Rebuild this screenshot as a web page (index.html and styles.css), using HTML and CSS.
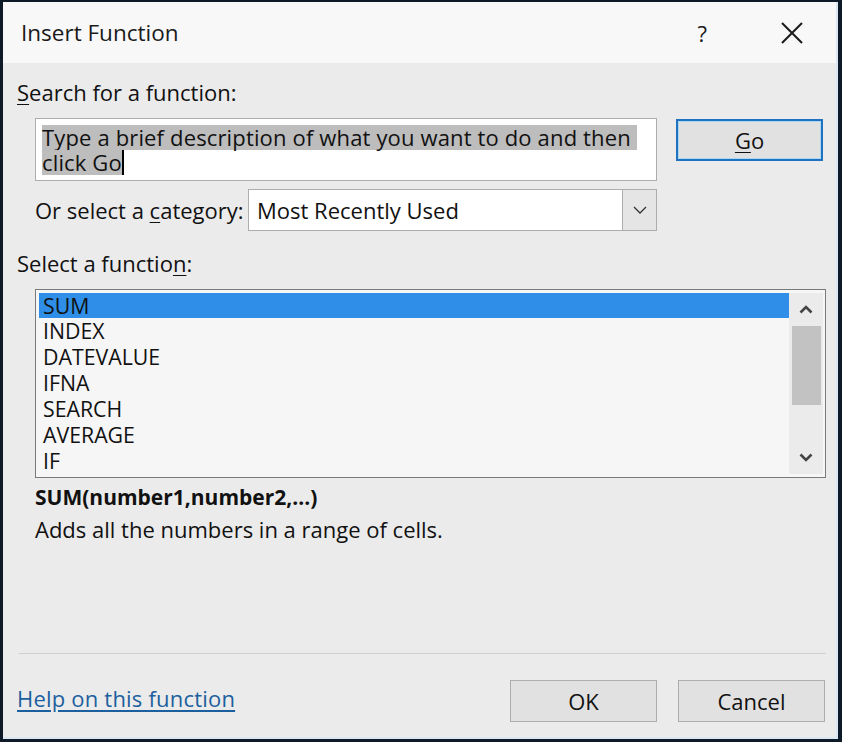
FILE: index.html
```html
<!DOCTYPE html>
<html lang="en">
<head>
<meta charset="utf-8">
<title>Insert Function</title>
<link rel="stylesheet" href="styles.css">
</head>
<body>
<div class="frame">
  <div class="window">
    <div class="titlebar">
      <span class="title">Insert Function</span>
      <span class="tb-help">?</span>
      <span class="tb-close">
        <svg width="22" height="22" viewBox="0 0 22 22"><path d="M1 1 L21 21 M21 1 L1 21" stroke="#1a1a1a" stroke-width="2" fill="none"/></svg>
      </span>
    </div>
    <div class="content">
      <div class="label"><u>S</u>earch for a function:</div>
      <div class="search-row">
        <div class="search-box">
          <div class="search-line"><span class="sel">Type a brief description of what you want to do and then </span></div>
          <div class="search-line"><span class="sel">click Go</span><span class="caret"></span></div>
        </div>
        <div class="btn btn-go"><u>G</u>o</div>
      </div>
      <div class="cat-row">
        <span class="cat-label">Or select a <u>c</u>ategory:</span>
        <div class="select">
          <span class="select-text">Most Recently Used</span>
          <span class="select-btn">
            <svg width="14" height="8" viewBox="0 0 14 8"><path d="M1 1 L7 7 L13 1" stroke="#333" stroke-width="1.3" fill="none"/></svg>
          </span>
        </div>
      </div>
      <div class="label label-fn">Select a functio<u>n</u>:</div>
      <div class="listbox">
        <div class="items">
          <div class="item selected">SUM</div>
          <div class="item">INDEX</div>
          <div class="item">DATEVALUE</div>
          <div class="item">IFNA</div>
          <div class="item">SEARCH</div>
          <div class="item">AVERAGE</div>
          <div class="item">IF</div>
        </div>
        <div class="scrollbar">
          <span class="arrow">
            <svg width="14" height="9" viewBox="0 0 14 9"><path d="M1.5 7.5 L7 2 L12.5 7.5" stroke="#444" stroke-width="2.6" fill="none"/></svg>
          </span>
          <div class="track"><div class="thumb"></div></div>
          <span class="arrow">
            <svg width="14" height="9" viewBox="0 0 14 9"><path d="M1.5 1.5 L7 7 L12.5 1.5" stroke="#444" stroke-width="2.6" fill="none"/></svg>
          </span>
        </div>
      </div>
      <div class="signature">SUM(number1,number2,...)</div>
      <div class="desc">Adds all the numbers in a range of cells.</div>
      <div class="separator"></div>
      <div class="footer">
        <a class="help-link" href="#">Help on this function</a>
        <div class="btn btn-ok">OK</div>
        <div class="btn btn-cancel">Cancel</div>
      </div>
    </div>
  </div>
</div>
</body>
</html>
```

FILE: styles.css
```css
* { box-sizing: border-box; }
html, body { margin: 0; padding: 0; }
body {
  width: 842px;
  height: 742px;
  background: #0f1a29;
  font-family: "Open Sans", "Noto Sans", sans-serif;
  color: #111;
  overflow: hidden;
}
.frame {
  padding: 2px 4px 3px 3px;
  height: 742px;
}
.window {
  height: 737px;
  border-right: 2px solid #dbe8f3;
  border-bottom: 2px solid #dbe8f3;
  display: flex;
  flex-direction: column;
  background: #ebebeb;
}
.titlebar {
  height: 61px;
  background: #f8f8f8;
  display: flex;
  align-items: center;
  padding-left: 18px;
  flex-shrink: 0;
}
.title {
  font-size: 22.5px;
  color: #1a1a1a;
  flex: 1;
}
.tb-help {
  font-size: 22px;
  color: #1a1a1a;
  margin-right: 74px;
}
.tb-close {
  display: flex;
  margin-right: 33px;
}
.content {
  flex: 1;
  display: flex;
  flex-direction: column;
  padding: 15px 11px 15px 14px;
}
.label {
  font-size: 22px;
  line-height: 28px;
  color: #111;
}
u { text-decoration-thickness: 1px; text-underline-offset: 3px; }
.search-row {
  display: flex;
  align-items: flex-start;
  margin-top: 12px;
  padding-left: 18px;
}
.search-box {
  width: 622px;
  height: 63px;
  background: #fff;
  border: 1px solid #adadad;
  padding: 6px 6px;
  font-size: 22px;
  letter-spacing: 0.15px;
}
.search-line { display: flex; align-items: center; height: 25px; }
.sel {
  display: inline-block;
  height: 25px;
  line-height: 25px;
  background: #bdbdbd;
  white-space: pre;
}
.caret { display: inline-block; width: 2px; height: 25px; background: #000; }
.btn {
  background: #e1e1e1;
  border: 1px solid #adadad;
  display: flex;
  align-items: center;
  justify-content: center;
  font-size: 22px;
  color: #111;
}
.btn-go {
  margin-left: 19px;
  margin-top: 1px;
  width: 147px;
  height: 42px;
  border: 2px solid #1f72c0;
  box-shadow: inset 0 0 0 1px #a8d8f5;
}
.cat-row {
  display: flex;
  align-items: center;
  margin-top: 8px;
  padding-left: 18px;
}
.cat-label {
  font-size: 22px;
  width: 213px;
}
.select {
  width: 409px;
  height: 42px;
  background: #fff;
  border: 1px solid #adadad;
  display: flex;
  align-items: center;
}
.select-text {
  flex: 1;
  padding-left: 8px;
  font-size: 22px;
}
.select-btn {
  width: 34px;
  height: 40px;
  background: #e5e5e5;
  border-left: 1px solid #adadad;
  display: flex;
  align-items: center;
  justify-content: center;
}
.label-fn { margin-top: 18px; }
.listbox {
  margin-top: 12px;
  margin-left: 18px;
  width: 791px;
  height: 189px;
  border: 1px solid #7a7a7a;
  background: #f6f6f6;
  display: flex;
  padding: 3px 2px 3px 3px;
}
.items { flex: 1; }
.item {
  height: 26px;
  line-height: 26px;
  font-size: 21.3px;
  padding-left: 4px;
  color: #111;
}
.item.selected { background: #2e8ee8; height: 25px; }
.scrollbar {
  width: 34px;
  background: #ebebeb;
  display: flex;
  flex-direction: column;
  align-items: center;
  padding: 0 2px;
}
.arrow {
  height: 33px;
  display: flex;
  align-items: center;
  justify-content: center;
}
.track { flex: 1; width: 100%; }
.thumb { height: 79px; background: #c2c2c2; margin-left: 1px; }
.signature {
  margin-top: 5px;
  margin-left: 18px;
  font-size: 21px;
  font-weight: 700;
  line-height: 28px;
}
.desc {
  margin-top: 4px;
  margin-left: 18px;
  font-size: 22px;
  line-height: 28px;
}
.separator {
  margin-top: auto;
  margin-left: 2px;
  height: 1px;
  background: #cfcfcf;
  margin-right: -1px;
}
.footer {
  display: flex;
  align-items: center;
  margin-top: 26px;
}
.help-link {
  font-size: 22px;
  letter-spacing: 0.2px;
  color: #1c5f9e;
  text-decoration: underline;
  text-underline-offset: 3px;
  flex: 1;
  margin-bottom: 7px;
}
.btn-ok, .btn-cancel {
  width: 147px;
  height: 42px;
}
.btn-cancel { margin-left: 21px; }
```
